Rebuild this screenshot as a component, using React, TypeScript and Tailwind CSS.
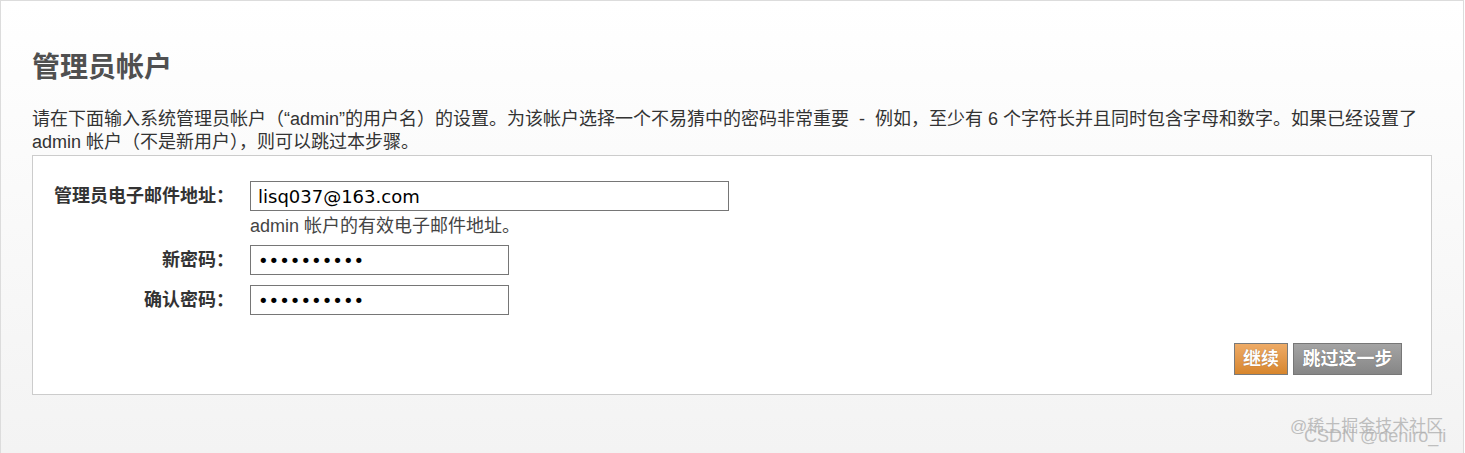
import React from "react";

const cjk = "font-['Liberation_Sans','Noto_Sans_CJK_SC',sans-serif]";

function Row({ label, children }: { label: string; children: React.ReactNode }) {
  return (
    <div className="flex items-center">
      <div className="w-[201px] shrink-0 text-right text-[18px] font-bold leading-[30px] text-[#333]">{label}</div>
      <div className="ml-[16px]">{children}</div>
    </div>
  );
}

export default function App() {
  return (
    <div
      className={`relative w-[1464px] h-[453px] overflow-hidden border-l border-t border-r border-[#dcdcdc] bg-gradient-to-b from-[#ffffff] to-[#f3f3f3] px-[31px] ${cjk}`}
    >
      <h1 className="mt-[50px] text-[28px] font-bold leading-[34px] text-[#505050]">管理员帐户</h1>
      <p className="mt-[23px] text-[18px] leading-[23px] text-[#333]">
        请在下面输入系统管理员帐户（“admin”的用户名）的设置。为该帐户选择一个不易猜中的密码非常重要 &nbsp;-&nbsp; 例如，至少有 6 个字符长并且同时包含字母和数字。如果已经设置了
        <br />
        admin 帐户（不是新用户），则可以跳过本步骤。
      </p>
      <div className="mt-[1px] border border-[#cccccc] bg-white pt-[25px] pb-[19px] pr-[29px]">
        <Row label="管理员电子邮件地址：">
          <input
            readOnly
            value="lisq037@163.com"
            className="block h-[30px] w-[479px] border border-[#767676] bg-white px-[7px] text-[18px] text-black outline-none font-['DejaVu_Sans',sans-serif]"
          />
        </Row>
        <div className="ml-[217px] mt-[3px] text-[18px] leading-[24px] text-[#444]">admin 帐户的有效电子邮件地址。</div>
        <div className="mt-[7px]">
          <Row label="新密码：">
            <input
              readOnly
              type="password"
              value="1234567890"
              className="block h-[30px] w-[259px] border border-[#767676] bg-white px-[7px] text-[18px] text-black outline-none font-['DejaVu_Sans',sans-serif]"
            />
          </Row>
        </div>
        <div className="mt-[10px]">
          <Row label="确认密码：">
            <input
              readOnly
              type="password"
              value="1234567890"
              className="block h-[30px] w-[259px] border border-[#767676] bg-white px-[7px] text-[18px] text-black outline-none font-['DejaVu_Sans',sans-serif]"
            />
          </Row>
        </div>
        <div className="mt-[28px] flex justify-end gap-[5px]">
          <button className="h-[32px] w-[54px] border border-[#7a7a7a] bg-gradient-to-b from-[#eeab66] to-[#d7862c] text-[18px] font-bold leading-[30px] text-white [text-shadow:0_0_1px_rgba(0,0,0,0.35)]">
            继续
          </button>
          <button className="h-[32px] w-[109px] border border-[#777] bg-gradient-to-b from-[#a4a4a4] to-[#868686] text-[18px] font-bold leading-[30px] text-white [text-shadow:0_0_1px_rgba(0,0,0,0.35)]">
            跳过这一步
          </button>
        </div>
      </div>
      <div className="absolute left-[1289px] top-[415px] text-[17px] leading-[22px] text-[#bdbdbd] whitespace-nowrap">@稀土掘金技术社区</div>
      <div className="absolute left-[1303px] top-[424px] text-[18px] leading-[22px] text-[#b0b0b0]/80 whitespace-nowrap">CSDN @deniro_li</div>
    </div>
  );
}
